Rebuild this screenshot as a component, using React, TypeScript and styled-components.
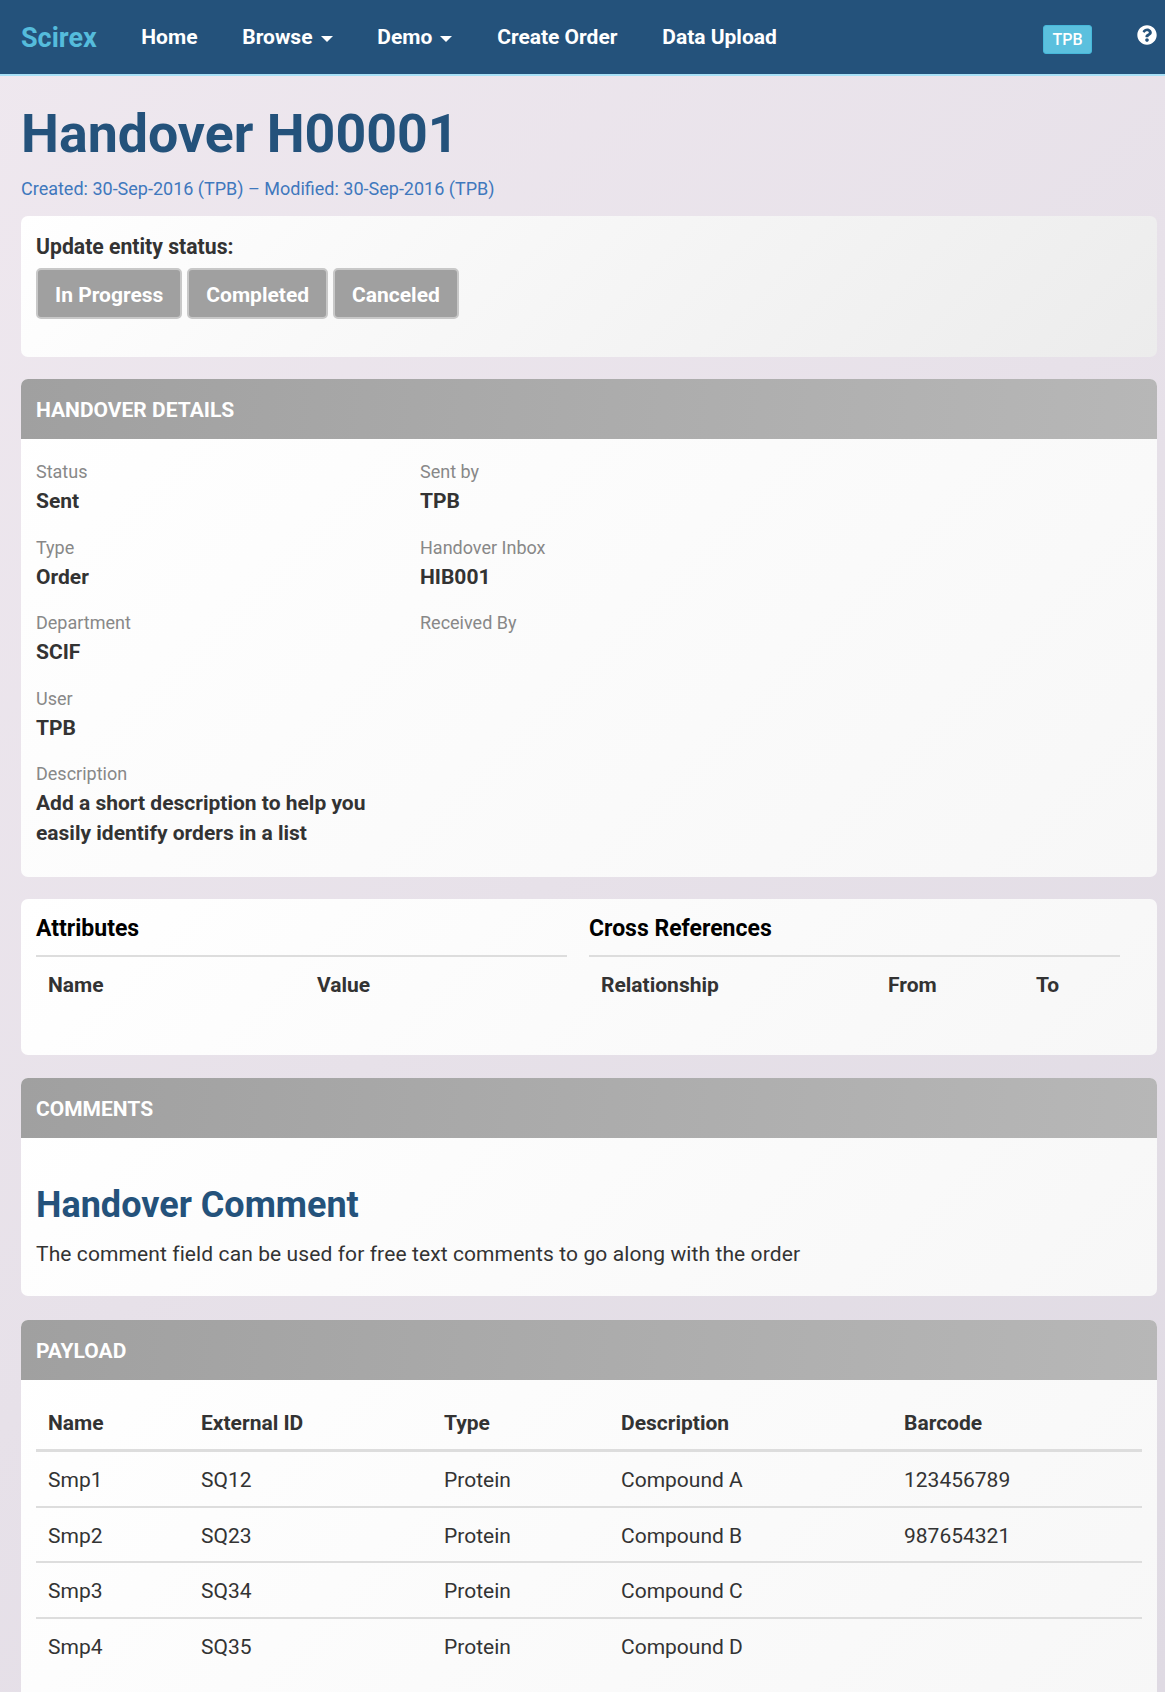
import React from "react";
import styled, { createGlobalStyle } from "styled-components";
import { FaQuestionCircle } from "react-icons/fa";

const Global = createGlobalStyle`
  html, body { margin: 0; padding: 0; }
  body {
    height: 1692px;
    overflow: hidden;
    font-family: Roboto, "Liberation Sans", sans-serif;
    font-size: 20px;
    line-height: 30px;
    color: #333;
    background: linear-gradient(135deg, #efe8ef 0%, #dfdae3 100%);
  }
`;

const Nav = styled.nav`
  display: flex;
  align-items: flex-start;
  height: 74px;
  background: #24527b;
  border-bottom: 2px solid #a9e1f7;
  padding-left: 21px;
  padding-right: 8px;
`;
const Brand = styled.a`
  color: #55bcdc;
  font-size: 27px;
  font-weight: 700;
  line-height: 76px;
  margin-right: 44.5px;
`;
const NavItem = styled.a`
  display: flex;
  align-items: center;
  color: #fff;
  font-size: 21px;
  font-weight: 700;
  line-height: 76px;
  height: 74px;
  margin-right: 44.8px;
`;
const Caret = styled.span`
  width: 0;
  height: 0;
  margin-left: 8px;
  margin-top: 3px;
  border-left: 6px solid transparent;
  border-right: 6px solid transparent;
  border-top: 6px solid #fff;
`;
const NavRight = styled.div`
  margin-left: auto;
  display: flex;
  align-items: flex-start;
`;
const Badge = styled.span`
  width: 49px;
  height: 29px;
  margin-top: 25px;
  box-sizing: border-box;
  text-align: center;
  background: #5bc0de;
  border: 1px solid #46b8da;
  border-radius: 3px;
  color: #fff;
  font-size: 16px;
  font-weight: 500;
  line-height: 27px;
`;
const Help = styled.span`
  display: flex;
  margin: 25px 0 0 45px;
  color: #fff;
  font-size: 20px;
`;

const Main = styled.main`
  padding: 0 8px 0 21px;
`;
const Title = styled.h1`
  margin: 25px 0 0;
  font-size: 53.7px;
  font-weight: 700;
  line-height: 66px;
  color: #24527b;
`;
const Meta = styled.p`
  margin: 7px 0 12px;
  color: #3f78bd;
  font-size: 18px;
  line-height: 30px;
`;
const Card = styled.section<{ $h?: number; $gap?: number }>`
  border-radius: 7px;
  overflow: hidden;
  margin-bottom: ${(p) => p.$gap ?? 22}px;
  background: linear-gradient(135deg, #ffffff 0%, #f7f7f7 100%);
  ${(p) => (p.$h ? `height: ${p.$h}px;` : "")}
`;
const StatusCard = styled(Card)`
  padding: 16px 15px 0;
  box-sizing: border-box;
  background: linear-gradient(135deg, #ffffff 0%, #ececec 100%);
`;
const StatusLabel = styled.div`
  font-weight: 700;
  font-size: 21.2px;
  line-height: 29px;
  color: #333;
`;
const Buttons = styled.div`
  display: flex;
  gap: 5px;
  margin-top: 7px;
`;
const Btn = styled.button`
  height: 51px;
  box-sizing: border-box;
  padding: 2px 17px 0;
  background: #a0a0a0;
  border: 2px solid #c8c8c8;
  border-radius: 5px;
  color: #fff;
  font: 700 21px Roboto, sans-serif;
`;
const Header = styled.h2`
  margin: 0;
  height: 60px;
  padding: 0 15px;
  background: linear-gradient(95deg, #a0a0a0 0%, #b7b7b7 100%);
  color: #fff;
  font-size: 21px;
  font-weight: 700;
  line-height: 62px;
  text-transform: uppercase;
`;
const Details = styled.div`
  display: grid;
  grid-template-columns: 384px 1fr;
  padding: 20px 15px 0;
`;
const Column = styled.div``;
const Field = styled.div`
  min-height: 75.5px;
`;
const FieldLabel = styled.div`
  color: #888;
  font-size: 18px;
  line-height: 26px;
  margin-bottom: 1px;
`;
const FieldValue = styled.div`
  color: #333;
  font-size: 21px;
  font-weight: 700;
  line-height: 30px;
  max-width: 340px;
`;
const Split = styled.div`
  display: grid;
  grid-template-columns: 531px 531px;
  gap: 22px;
  padding: 0 15px;
`;
const SubTitle = styled.h3`
  margin: 0;
  padding-top: 15px;
  height: 41px;
  font-size: 23px;
  font-weight: 700;
  line-height: 30px;
  color: #000;
  border-bottom: 2px solid #ddd;
`;
const Table = styled.table`
  width: 100%;
  border-collapse: collapse;
  table-layout: fixed;
`;
const Th = styled.th<{ $w?: number }>`
  box-sizing: border-box;
  text-align: left;
  font-weight: 700;
  font-size: 21px;
  line-height: 30px;
  padding: 13px 12px 11px;
  color: #333;
  ${(p) => (p.$w ? `width: ${p.$w}px;` : "")}
`;
const PayloadHead = styled.tr`
  border-bottom: 3px solid #ddd;
`;
const Row = styled.tr`
  border-bottom: 2px solid #ddd;
  &:last-child { border-bottom: 0; }
`;
const Td = styled.td`
  padding: 14px 12px 10px;
  height: 29.5px;
  font-size: 21px;
  line-height: 29.5px;
  color: #333;
`;
const CommentBody = styled.div`
  padding: 42px 15px 15px;
`;
const CommentTitle = styled.h3`
  margin: 0;
  font-size: 36px;
  font-weight: 700;
  line-height: 50px;
  color: #24527b;
`;
const CommentText = styled.p`
  margin: 9px 0 0;
  font-size: 21px;
  letter-spacing: 0.1px;
  line-height: 30px;
  color: #333;
`;
const PayloadBody = styled.div`
  padding: 15px 15px 40px;
`;

const left = [
  ["Status", "Sent"],
  ["Type", "Order"],
  ["Department", "SCIF"],
  ["User", "TPB"],
  ["Description", "Add a short description to help you easily identify orders in a list"],
];
const right = [
  ["Sent by", "TPB"],
  ["Handover Inbox", "HIB001"],
  ["Received By", ""],
];
const rows = [
  ["Smp1", "SQ12", "Protein", "Compound A", "123456789"],
  ["Smp2", "SQ23", "Protein", "Compound B", "987654321"],
  ["Smp3", "SQ34", "Protein", "Compound C", ""],
  ["Smp4", "SQ35", "Protein", "Compound D", ""],
];

export default function App() {
  return (
    <>
      <Global />
      <Nav>
        <Brand>Scirex</Brand>
        <NavItem>Home</NavItem>
        <NavItem>Browse<Caret /></NavItem>
        <NavItem>Demo<Caret /></NavItem>
        <NavItem>Create Order</NavItem>
        <NavItem>Data Upload</NavItem>
        <NavRight>
          <Badge>TPB</Badge>
          <Help><FaQuestionCircle /></Help>
        </NavRight>
      </Nav>
      <Main>
        <Title>Handover H00001</Title>
        <Meta>Created: 30-Sep-2016 (TPB) – Modified: 30-Sep-2016 (TPB)</Meta>
        <StatusCard $h={141}>
          <StatusLabel>Update entity status:</StatusLabel>
          <Buttons>
            <Btn>In Progress</Btn>
            <Btn>Completed</Btn>
            <Btn>Canceled</Btn>
          </Buttons>
        </StatusCard>
        <Card $h={498}>
          <Header>Handover Details</Header>
          <Details>
            <Column>
              {left.map(([l, v]) => (
                <Field key={l}>
                  <FieldLabel>{l}</FieldLabel>
                  <FieldValue>{v}</FieldValue>
                </Field>
              ))}
            </Column>
            <Column>
              {right.map(([l, v]) => (
                <Field key={l}>
                  <FieldLabel>{l}</FieldLabel>
                  <FieldValue>{v}</FieldValue>
                </Field>
              ))}
            </Column>
          </Details>
        </Card>
        <Card $h={156} $gap={23}>
          <Split>
            <div>
              <SubTitle>Attributes</SubTitle>
              <Table>
                <thead>
                  <tr><Th $w={269}>Name</Th><Th>Value</Th></tr>
                </thead>
              </Table>
            </div>
            <div>
              <SubTitle>Cross References</SubTitle>
              <Table>
                <thead>
                  <tr><Th $w={287}>Relationship</Th><Th $w={148}>From</Th><Th>To</Th></tr>
                </thead>
              </Table>
            </div>
          </Split>
        </Card>
        <Card $h={218} $gap={24}>
          <Header>Comments</Header>
          <CommentBody>
            <CommentTitle>Handover Comment</CommentTitle>
            <CommentText>The comment field can be used for free text comments to go along with the order</CommentText>
          </CommentBody>
        </Card>
        <Card>
          <Header>Payload</Header>
          <PayloadBody>
            <Table>
              <thead>
                <PayloadHead>
                  <Th $w={153}>Name</Th>
                  <Th $w={243}>External ID</Th>
                  <Th $w={177}>Type</Th>
                  <Th $w={283}>Description</Th>
                  <Th>Barcode</Th>
                </PayloadHead>
              </thead>
              <tbody>
                {rows.map((r) => (
                  <Row key={r[0]}>
                    {r.map((c, i) => <Td key={i}>{c}</Td>)}
                  </Row>
                ))}
              </tbody>
            </Table>
          </PayloadBody>
        </Card>
      </Main>
    </>
  );
}
